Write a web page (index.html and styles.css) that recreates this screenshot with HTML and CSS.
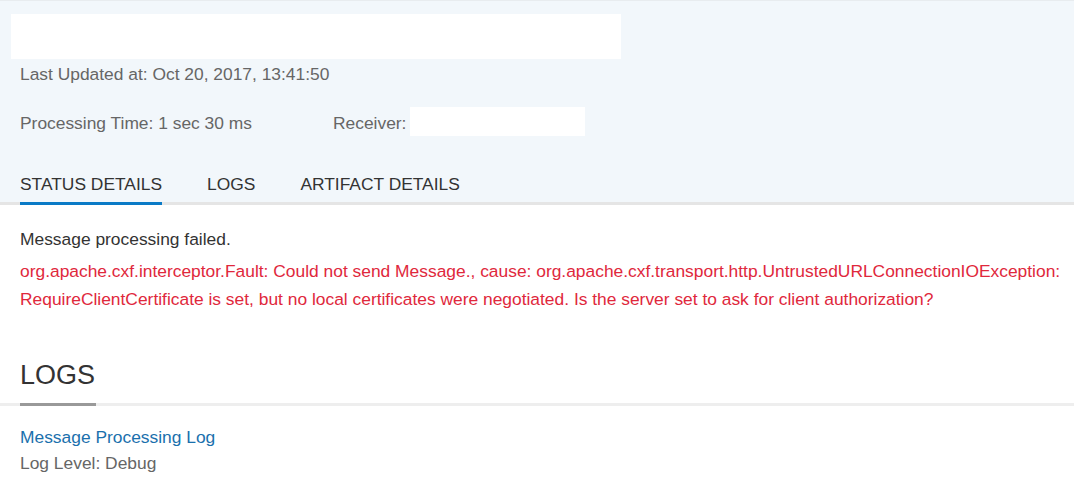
FILE: index.html
```html
<!DOCTYPE html>
<html>
<head>
<meta charset="utf-8">
<link rel="stylesheet" href="styles.css">
</head>
<body>
<div class="page">
  <header class="header">
    <div class="title-box"></div>
    <div class="updated">Last Updated at: Oct 20, 2017, 13:41:50</div>
    <div class="meta-row">
      <span class="meta-time">Processing Time: 1 sec 30 ms</span>
      <span class="meta-receiver">Receiver:<span class="receiver-box"></span></span>
    </div>
    <nav class="tabs">
      <span class="tab tab-active">STATUS DETAILS</span>
      <span class="tab">LOGS</span>
      <span class="tab">ARTIFACT DETAILS</span>
    </nav>
  </header>
  <section class="status">
    <p class="status-msg">Message processing failed.</p>
    <p class="error">org.apache.cxf.interceptor.Fault: Could not send Message., cause: org.apache.cxf.transport.http.UntrustedURLConnectionIOException: RequireClientCertificate is set, but no local certificates were negotiated. Is the server set to ask for client authorization?</p>
  </section>
  <section class="logs">
    <div class="section-head">
      <h2 class="section-title">LOGS</h2>
    </div>
    <a class="log-link" href="#">Message Processing Log</a>
    <div class="log-level">Log Level: Debug</div>
  </section>
</div>
</body>
</html>
```
FILE: styles.css
```css
html, body {
  margin: 0;
  padding: 0;
  background: #ffffff;
}
body {
  font-family: "Liberation Sans", Arial, sans-serif;
  font-size: 17.4px;
  color: #333333;
}
.page {
  width: 1074px;
}
.header {
  background: #f2f7fb;
  border-top: 1px solid #e8ecef;
  border-bottom: 3px solid #e5e5e5;
  padding: 13px 0 0 0;
}
.title-box {
  margin-left: 11px;
  width: 610px;
  height: 45px;
  background: #ffffff;
}
.updated {
  margin: 5px 0 0 20px;
  color: #666666;
  line-height: 20px;
}
.meta-row {
  display: flex;
  align-items: center;
  margin: 23px 0 0 20px;
  color: #666666;
  height: 29px;
}
.meta-time {
  width: 313px;
  padding-top: 3px;
}
.meta-receiver {
  display: flex;
  align-items: center;
  padding-top: 3px;
}
.receiver-box {
  display: inline-block;
  width: 175px;
  height: 29px;
  background: #ffffff;
  margin-left: 4px;
  margin-top: -3px;
}
.tabs {
  display: flex;
  gap: 45px;
  margin: 38px 0 0 20px;
}
.tab {
  color: #333333;
  line-height: 20px;
  padding-bottom: 8px;
  margin-bottom: -3px;
  border-bottom: 3px solid transparent;
}
.tab-active {
  border-bottom-color: #0a7ac6;
}
.status {
  padding: 24px 2px 0 20px;
}
.status-msg {
  margin: 0;
  line-height: 20px;
  color: #333333;
}
.error {
  margin: 8px 0 0 0;
  color: #e0283c;
  line-height: 28px;
}
.logs {
  margin-top: 46px;
}
.section-head {
  border-bottom: 3px solid #eeeeee;
  padding-left: 20px;
}
.section-title {
  display: inline-block;
  margin: 0 0 -3px 0;
  font-size: 27px;
  font-weight: normal;
  color: #333333;
  line-height: 32px;
  padding-bottom: 12px;
  border-bottom: 3px solid #999999;
  width: 76px;
}
.log-link {
  display: block;
  margin: 19px 0 0 20px;
  color: #1a70ad;
  text-decoration: none;
  line-height: 24px;
}
.log-level {
  margin: 2px 0 0 20px;
  color: #666666;
  line-height: 24px;
}
```
